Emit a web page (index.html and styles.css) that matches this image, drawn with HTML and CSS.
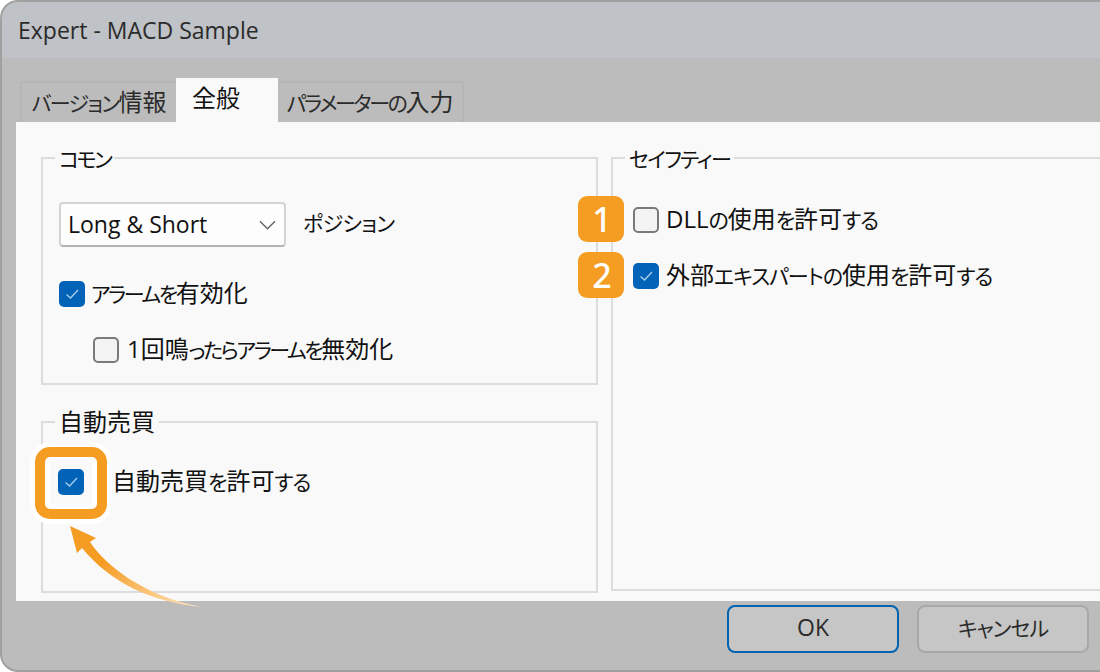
FILE: index.html
```html
<!DOCTYPE html>
<html lang="ja">
<head>
<meta charset="utf-8">
<title>Expert - MACD Sample</title>
<link rel="stylesheet" href="styles.css">
</head>
<body>
<div class="window">
  <header class="titlebar">Expert - MACD Sample</header>
  <nav class="tabs">
    <div class="tab tab-first"><span><span class="k k-mid">バージョン</span>情報</span></div>
    <div class="tab tab-active"><span>全般</span></div>
    <div class="tab tab-last"><span><span class="k k-narrow">パラメーターの</span>入力</span></div>
  </nav>
  <main class="panel">
    <div class="col">
      <section class="group group-common">
        <div class="legend"><span class="k k-narrow">コモン</span></div>
        <div class="row-select">
          <div class="select"><span>Long &amp; Short</span>
            <svg class="chevron" viewBox="0 0 18 10"><path d="M1 1l8 8 8-8"/></svg>
          </div>
          <span class="select-label k k-wide">ポジション</span>
        </div>
        <label class="check check-alarm"><span class="box on"><svg viewBox="0 0 26 26"><path d="M7.5 13.5l4 3.5 7.5-8"/></svg></span><span class="check-text"><span class="k k-narrow">アラームを</span>有効化</span></label>
        <label class="check check-once"><span class="box"></span><span class="check-text">1回鳴<span class="k k-narrow">ったらアラームを</span>無効化</span></label>
      </section>
      <section class="group group-auto">
        <div class="legend">自動売買</div>
        <label class="check check-auto"><span class="box on"><svg viewBox="0 0 26 26"><path d="M7.5 13.5l4 3.5 7.5-8"/></svg></span><span class="check-text">自動売買<span class="k">を</span>許可<span class="k">する</span></span></label>
      </section>
    </div>
    <section class="group group-safety">
      <div class="legend"><span class="k k-mid">セイフティー</span></div>
      <label class="check check-dll"><span class="box"></span><span class="check-text">DLL<span class="k">の</span>使用<span class="k">を</span>許可<span class="k">する</span></span></label>
      <label class="check check-ext"><span class="box on"><svg viewBox="0 0 26 26"><path d="M7.5 13.5l4 3.5 7.5-8"/></svg></span><span class="check-text">外部<span class="k">エキスパートの</span>使用<span class="k">を</span>許可<span class="k">する</span></span></label>
    </section>
  </main>
  <footer class="footer">
    <button class="btn btn-default"><span>OK</span></button>
    <button class="btn"><span class="k">キャンセル</span></button>
  </footer>

  <div class="badge badge-1">1</div>
  <div class="badge badge-2">2</div>
  <div class="highlight"></div>
  <svg class="arrow" viewBox="0 0 150 95">
    <defs>
      <linearGradient id="arrowFill" x1="0.35" y1="0.35" x2="1" y2="0.95">
        <stop offset="0" stop-color="#f59c23"/>
        <stop offset="1" stop-color="#fde3bd"/>
      </linearGradient>
    </defs>
    <path fill="url(#arrowFill)" d="M10 6L36 18L30 22C45 45 85 77 142 87C90 82 50 62 22 28L17 33Z"/>
  </svg>
</div>
</body>
</html>
```
FILE: styles.css
```css
* { box-sizing: border-box; }
html, body { margin: 0; padding: 0; background: #fff; }
body { width: 1100px; height: 672px; overflow: hidden; }

.window {
  position: relative;
  width: 1100px;
  height: 672px;
  overflow: hidden;
  display: flex;
  flex-direction: column;
  background: #bcbcbc;
  border: 2px solid #a0a0a0;
  border-right: 0;
  border-radius: 18px 0 0 18px;
  font-family: "Open Sans", "Noto Sans CJK JP", sans-serif;
  font-size: 23px;
  color: #111;
  font-feature-settings: "palt";
}

.k { font-size: 21px; letter-spacing: -1px; }
.k-wide { letter-spacing: -0.6px; }
.k-mid { letter-spacing: -1.6px; }
.k-narrow { letter-spacing: -2.4px; }

.titlebar {
  height: 56px;
  flex: none;
  padding-left: 16px;
  display: flex;
  align-items: center;
  background: #bfc2c6;
  color: #2b2b2b;
}

.tabs {
  height: 64px;
  flex: none;
  display: flex;
  align-items: flex-end;
  padding-left: 18px;
}
.tab {
  height: 41px;
  display: flex;
  align-items: center;
  justify-content: center;
  background: #bcbcbc;
  border: 2px solid #b5b5b5;
  border-bottom: 0;
  color: #2b2b2b;
  white-space: nowrap;
  font-size: 24px;
  padding-bottom: 5px;
}
.tab-first { width: 156px; border-right: 0; }
.tab-last { width: 186px; border-left: 0; }
.tab-active {
  width: 102px;
  height: 44px;
  background: #f9f9f9;
  border: 0;
  color: #111;
  padding: 0 22px 8px 0;
}

.panel {
  height: 479px;
  flex: none;
  margin-left: 14px;
  padding: 35px 0 0 25px;
  background: #f9f9f9;
  display: flex;
  gap: 13px;
  overflow: hidden;
}

.col { width: 557px; flex: none; display: flex; flex-direction: column; gap: 36px; }

.group { border: 2px solid #dcdcdc; }
.group-common { height: 228px; }
.group-auto { height: 172px; }
.group-safety { width: 560px; flex: none; height: 434px; }

.legend {
  width: fit-content;
  height: 30px;
  line-height: 30px;
  margin: -16px 0 0 12px;
  padding: 0 4px;
  background: #f9f9f9;
  font-size: 24px;
}

.row-select { display: flex; align-items: center; gap: 17px; margin: 29px 0 0 16px; }
.select {
  width: 227px;
  height: 45px;
  padding: 0 8px 2px 7px;
  display: flex;
  align-items: center;
  justify-content: space-between;
  background: #fdfdfd;
  border: 2px solid #d4d4d4;
  border-bottom-color: #b4b4b4;
  border-radius: 4px;
}
.chevron { width: 17px; height: 10px; fill: none; stroke: #666; stroke-width: 1.5; margin-top: 2px; }
.select-label { margin-top: -6px; }

.check { display: flex; align-items: center; gap: 7px; height: 26px; white-space: nowrap; font-size: 24px; }
.check-text { margin-bottom: 6px; }
.check-alarm { margin: 34px 0 0 16px; gap: 6px; }
.check-once { margin: 30px 0 0 50px; gap: 8px; }
.check-auto { margin: 32px 0 0 15px; gap: 28px; }
.check-dll { margin: 34px 0 0 20px; }
.check-ext { margin: 30px 0 0 20px; }

.box {
  width: 26px;
  height: 26px;
  flex: none;
  background: #f3f3f3;
  border: 2px solid #7a7a7a;
  border-radius: 5px;
}
.box.on { background: #0063b8; border: 0; }
.box svg { display: block; width: 26px; height: 26px; fill: none; stroke: #a8cbe8; stroke-width: 1.4; }

.footer {
  flex: 1;
  display: flex;
  justify-content: flex-end;
  gap: 18px;
  padding: 4px 11px 0 0;
  align-items: flex-start;
}
.btn {
  width: 172px;
  height: 48px;
  font: inherit;
  color: #2b2b2b;
  background: #c6c6c6;
  border: 2px solid #a8a8a8;
  border-radius: 8px;
  padding: 0 0 4px;
}
.btn-default { border-color: #0063b1; }

.badge {
  position: absolute;
  left: 576px;
  width: 46px;
  height: 46px;
  display: flex;
  align-items: center;
  justify-content: center;
  background: #f59c23;
  border-radius: 9px;
  color: #fff;
  font-size: 34px;
  font-weight: 500;
  font-family: "Noto Sans", sans-serif;
  padding-left: 2px;
}
.badge-1 { top: 194px; }
.badge-2 { top: 250px; }

.highlight {
  position: absolute;
  left: 33px;
  top: 445px;
  width: 72px;
  height: 72px;
  border: 10px solid #f59c23;
  border-radius: 15px;
  box-shadow: 0 0 0 5px #fff, inset 0 0 0 5px #fff;
}

.arrow {
  position: absolute;
  left: 58px;
  top: 518px;
  width: 150px;
  height: 95px;
}
```
